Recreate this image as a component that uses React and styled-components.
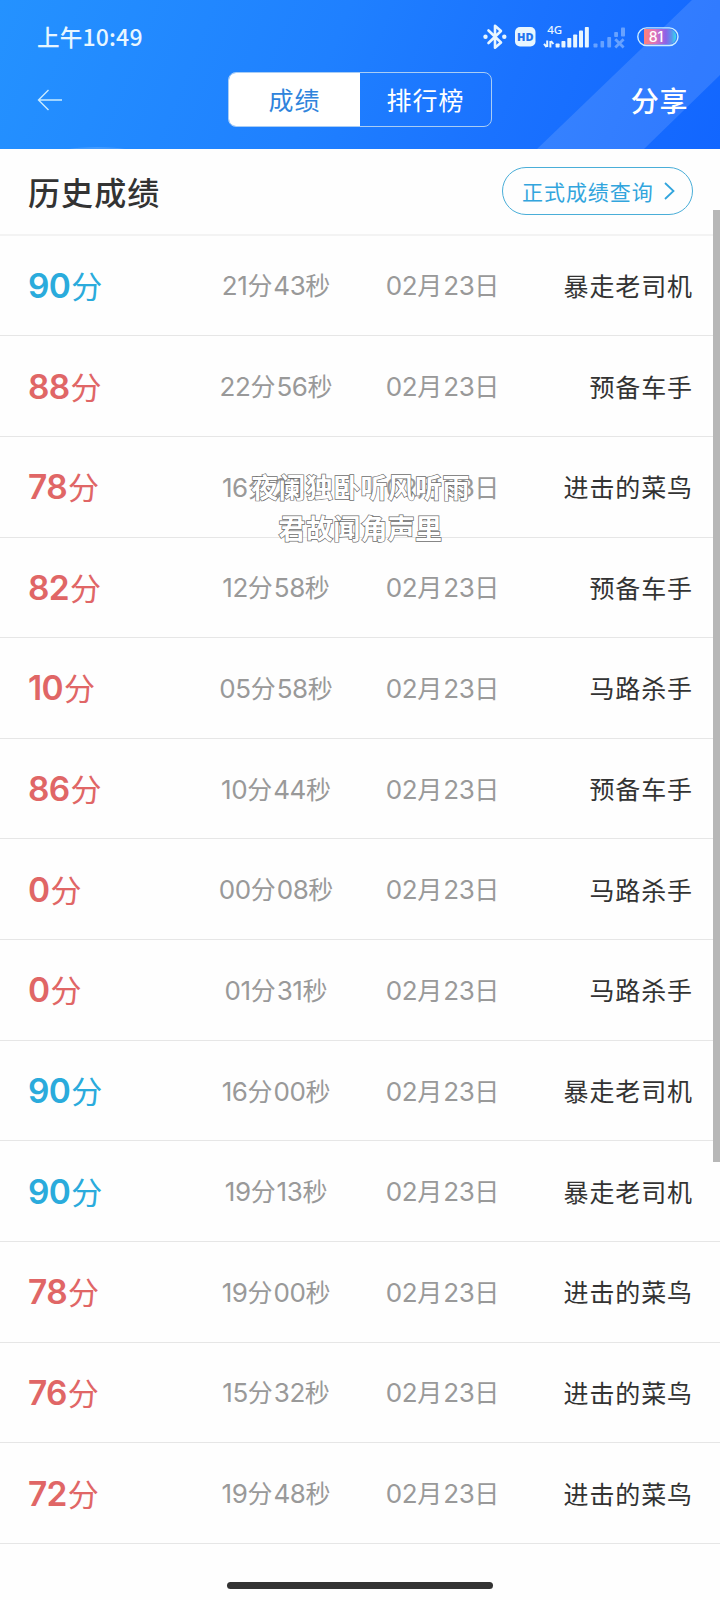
import React from "react";
import styled, { createGlobalStyle } from "styled-components";

const GlobalStyle = createGlobalStyle`
  * {
    box-sizing: border-box;
  }
  body {
    margin: 0;
    background: #fefefe;
    font-family: "Noto Sans CJK SC", "Noto Sans", sans-serif;
  }
`;

const Screen = styled.div`
  position: relative;
  display: flex;
  flex-direction: column;
  width: 720px;
  height: 1600px;
  overflow: hidden;
  background: #fefefe;
`;

const Header = styled.header`
  position: relative;
  height: 149px;
  flex: none;
  overflow: hidden;
  background: linear-gradient(112deg, #2492ff 0%, #1f80ff 45%, #1a72ff 70%, #1266ff 100%);
`;

const HeaderArt = styled.svg`
  position: absolute;
  inset: 0;
`;

const StatusBar = styled.div`
  position: relative;
  display: flex;
  align-items: center;
  height: 72px;
  padding: 1px 41px 0 37px;
  color: #e8f6ff;
`;

const Clock = styled.div`
  margin-right: auto;
  padding-bottom: 1px;
  font-size: 22.5px;
  font-weight: 500;
  line-height: 30px;
  letter-spacing: 0.2px;

  span {
    font-size: 23px;
  }
`;

const StatusIcon = styled.svg`
  display: block;
  flex: none;
  margin-left: ${(props) => props.$gap || 0}px;
`;

const NavBar = styled.nav`
  position: relative;
  display: grid;
  grid-template-columns: 1fr 264px 1fr;
  align-items: center;
  height: 55px;
  padding: 0 32px 0 37px;
  color: #fff;
`;

const Tabs = styled.div`
  display: flex;
  width: 264px;
  height: 55px;
  margin-left: -2.5px;
  overflow: hidden;
  border: 1px solid #a9cdf5;
  border-radius: 8px;
`;

const Tab = styled.div`
  flex: 1;
  font-size: 25px;
  line-height: 53px;
  letter-spacing: 1px;
  text-align: center;
  color: ${(props) => (props.$active ? "#2f84dc" : "#fff")};
  background: ${(props) => (props.$active ? "#fff" : "transparent")};
`;

const Share = styled.div`
  justify-self: end;
  padding-top: 1px;
  font-size: 28px;
  font-weight: 500;
  line-height: 54px;
  letter-spacing: 0.6px;
`;

const SectionHead = styled.div`
  display: flex;
  align-items: center;
  justify-content: space-between;
  flex: none;
  height: 86.6px;
  padding: 0 27px 0 28px;
  border-bottom: 2px solid #f3f3f3;
`;

const Title = styled.h1`
  margin: 0;
  padding-bottom: 1px;
  font-size: 32px;
  font-weight: 500;
  line-height: 48px;
  letter-spacing: 1.1px;
  color: #333;
`;

const QueryButton = styled.div`
  display: flex;
  align-items: center;
  justify-content: space-between;
  width: 191px;
  height: 48px;
  padding: 0 17px 1px 19px;
  border: 1px solid #4aaed8;
  border-radius: 24px;
  font-size: 21px;
  letter-spacing: 0.95px;
  color: #32a5dd;
`;

const Row = styled.div`
  display: grid;
  grid-template-columns: 166px 164px 169px 1fr;
  align-items: center;
  flex: none;
  height: 100.65px;
  padding: 0 27px 1px 28px;
  border-bottom: 1px solid #e6e6e6;
  line-height: 48px;
  white-space: nowrap;
`;

const Score = styled.div`
  padding-top: 1px;
  font-size: 31px;
  color: ${(props) => (props.$pass ? "#2aabdc" : "#e06666")};
  b {
    font-family: Inter, sans-serif;
    font-size: 33.5px;
    font-weight: 600;
    letter-spacing: -0.7px;
    margin-right: 1px;
  }
`;

const Meta = styled.div`
  padding: 1px 0 0 1px;
  font-size: 25px;
  letter-spacing: 0.9px;
  text-align: center;
  color: #999;
`;

const Digits = styled.span`
  font-family: Inter, sans-serif;
  font-size: 26px;
  letter-spacing: -0.4px;
`;

const Rank = styled.div`
  font-size: 25px;
  letter-spacing: 0.9px;
  text-align: right;
  color: #333;
`;

const ScrollThumb = styled.div`
  position: absolute;
  top: 210px;
  right: 0;
  width: 7px;
  height: 952px;
  background: #b7b7b7;
`;

// floating desktop lyrics drawn over the list
const Lyrics = styled.div`
  position: absolute;
  top: 466px;
  left: 0;
  width: 721px;
  font-size: 27px;
  font-weight: 700;
  line-height: 41px;
  letter-spacing: 0.3px;
  text-align: center;
  color: #fff;
  -webkit-text-stroke: 1.4px #6c6c6c;
  paint-order: stroke fill;
`;

const HomeIndicator = styled.div`
  width: 266px;
  height: 7px;
  margin: auto auto 11px 227px;
  border-radius: 4px;
  background: #333;
`;

const records = [
  [90, "21分43秒", "暴走老司机"],
  [88, "22分56秒", "预备车手"],
  [78, "16分24秒", "进击的菜鸟"],
  [82, "12分58秒", "预备车手"],
  [10, "05分58秒", "马路杀手"],
  [86, "10分44秒", "预备车手"],
  [0, "00分08秒", "马路杀手"],
  [0, "01分31秒", "马路杀手"],
  [90, "16分00秒", "暴走老司机"],
  [90, "19分13秒", "暴走老司机"],
  [78, "19分00秒", "进击的菜鸟"],
  [76, "15分32秒", "进击的菜鸟"],
  [72, "19分48秒", "进击的菜鸟"],
];

function MetaText({ value }) {
  return (
    <Meta>
      {value.split(/(\d+)/).map((part, i) => (i % 2 ? <Digits key={i}>{part}</Digits> : part))}
    </Meta>
  );
}

function Bluetooth() {
  return (
    <StatusIcon width="24" height="28" viewBox="0 0 24 28">
      <path
        d="M5.5 7.5 L18 19.5 L12 24.7 V2.7 L18 8 L5.5 20"
        fill="none"
        stroke="currentColor"
        strokeWidth="2.6"
        strokeLinejoin="round"
        strokeLinecap="round"
      />
      <circle cx="2.5" cy="13.7" r="2.2" fill="currentColor" />
      <circle cx="21.3" cy="13.7" r="2.2" fill="currentColor" />
    </StatusIcon>
  );
}

function HdBadge() {
  return (
    <StatusIcon $gap={8} width="21" height="20" viewBox="0 0 21 20">
      <rect y="0" width="20.5" height="19.5" rx="5" fill="currentColor" />
      <text
        x="10.3"
        y="13.7"
        textAnchor="middle"
        fontFamily="Open Sans, sans-serif"
        fontSize="11"
        fontWeight="800"
        fill="#2474ee"
      >
        HD
      </text>
    </StatusIcon>
  );
}

function Signal() {
  const bars = [4, 6.5, 9.5, 13, 17, 20.5];
  return (
    <StatusIcon $gap={7} width="46" height="28" viewBox="0 0 46 28">
      <text
        x="4.3"
        y="11"
        fontFamily="Noto Sans, sans-serif"
        fontSize="11.5"
        fontWeight="500"
        fill="currentColor"
      >
        4G
      </text>
      <path
        d="M4.2 17.5 V24 M3.6 24 L1 20.8 M7.4 24.5 V18 M8 18 L10.4 21"
        fill="none"
        stroke="currentColor"
        strokeWidth="2"
      />
      {bars.map((h, i) => (
        <rect key={h} x={12.6 + i * 5.85} y={24.5 - h} width="4" height={h} rx="0.8" fill="currentColor" />
      ))}
    </StatusIcon>
  );
}

function NoSignal() {
  return (
    <StatusIcon $gap={4} width="34" height="28" viewBox="0 0 34 28" opacity="0.38">
      <g fill="currentColor">
        <rect x="0.5" y="20.5" width="4" height="4" rx="0.8" />
        <rect x="7.5" y="18" width="3.6" height="6.5" rx="0.8" />
        <rect x="14.3" y="14" width="3.8" height="10.5" rx="0.8" />
        <rect x="21.2" y="9" width="3.8" height="5" rx="0.8" />
        <rect x="28" y="4.5" width="4" height="9" rx="0.8" />
      </g>
      <path d="M22.3 16.3 L30.6 24.5 M30.6 16.3 L22.3 24.5" stroke="currentColor" strokeWidth="2.8" />
    </StatusIcon>
  );
}

function Battery() {
  return (
    <StatusIcon $gap={10} width="42" height="20" viewBox="0 0 42 20">
      <defs>
        <linearGradient id="charge">
          <stop offset="0" stopColor="#ff8278" />
          <stop offset="0.35" stopColor="#dc72bd" />
          <stop offset="0.68" stopColor="#8b62e8" />
          <stop offset="0.85" stopColor="#5c92ed" />
          <stop offset="1" stopColor="#35dcec" />
        </linearGradient>
      </defs>
      <path d="M7 2 H31.5 A7.7 7.7 0 0 1 31.5 17.4 H7 Z" fill="url(#charge)" />
      <rect x="0.8" y="0.9" width="40.2" height="17.6" rx="8.8" fill="none" stroke="#cdeeff" strokeWidth="1.4" />
      <text
        x="19"
        y="14.8"
        textAnchor="middle"
        fontFamily="Inter, sans-serif"
        fontSize="14"
        fontWeight="500"
        fill="#fff"
      >
        81
      </text>
    </StatusIcon>
  );
}

export default function App() {
  return (
    <Screen>
      <GlobalStyle />
      <Header>
        <HeaderArt width="720" height="150" viewBox="0 0 720 150">
          <path d="M692 0 H720 V75 L643 150 H536 Z" fill="#fff" fillOpacity="0.125" />
          <ellipse cx="97" cy="187" rx="90" ry="40" fill="#fff" fillOpacity="0.15" />
        </HeaderArt>
        <StatusBar>
          <Clock>
            上午<span>10:49</span>
          </Clock>
          <Bluetooth />
          <HdBadge />
          <Signal />
          <NoSignal />
          <Battery />
        </StatusBar>
        <NavBar>
          <svg width="26" height="22" viewBox="0 0 26 22">
            <path d="M25 11 H1.5 M11.5 1 L1.5 11 L11.5 21" fill="none" stroke="#c9ebff" strokeWidth="1.4" />
          </svg>
          <Tabs>
            <Tab $active>成绩</Tab>
            <Tab>排行榜</Tab>
          </Tabs>
          <Share>分享</Share>
        </NavBar>
      </Header>

      <SectionHead>
        <Title>历史成绩</Title>
        <QueryButton>
          正式成绩查询
          <svg width="11" height="18" viewBox="0 0 11 18">
            <path d="M1 1 L9.5 9 L1 17" fill="none" stroke="currentColor" strokeWidth="1.8" />
          </svg>
        </QueryButton>
      </SectionHead>

      {records.map(([score, time, rank], i) => (
        <Row key={i}>
          <Score $pass={score >= 90}>
            <b>{score}</b>分
          </Score>
          <MetaText value={time} />
          <MetaText value="02月23日" />
          <Rank>{rank}</Rank>
        </Row>
      ))}

      <HomeIndicator />
      <ScrollThumb />
      <Lyrics>
        夜阑独卧听风听雨
        <br />
        君故闻角声里
      </Lyrics>
    </Screen>
  );
}
